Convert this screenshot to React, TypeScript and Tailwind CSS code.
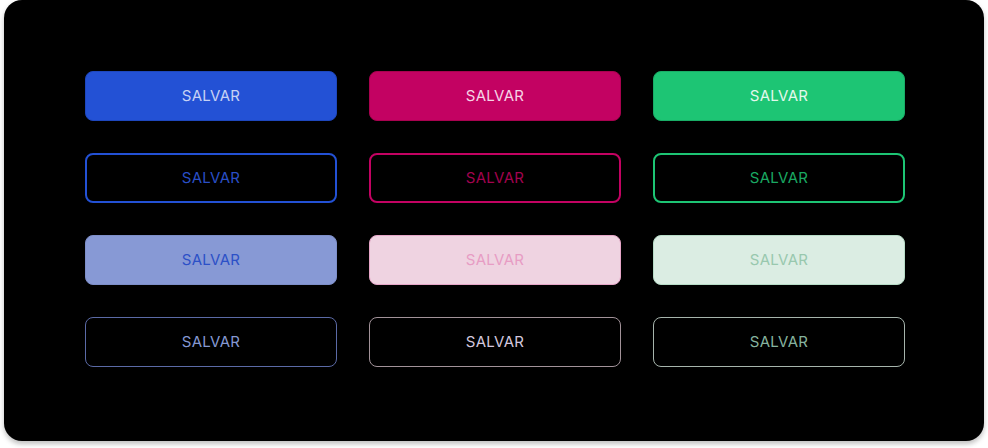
import React from "react";

type Btn = {
  id: number;
  box: string;
  text: string;
};

const Buttons: Btn[] = [
  { id: 1, box: "bg-[#2351d5] border border-[#1e47bd]", text: "text-[#c7d1f4]" },
  { id: 2, box: "bg-[#c30262] border border-[#a8024f]", text: "text-[#f6d4e6]" },
  { id: 3, box: "bg-[#1dc574] border border-[#19ad66]", text: "text-[#e3f8ec]" },
  { id: 4, box: "bg-black border-2 border-[#2351d5]", text: "text-[#2a4fc6]" },
  { id: 5, box: "bg-black border-2 border-[#c30262]", text: "text-[#a2034f]" },
  { id: 6, box: "bg-black border-2 border-[#1dc574]", text: "text-[#1aa862]" },
  { id: 7, box: "bg-[#8799d5] border border-[#7d8ec8]", text: "text-[#2c50c7]" },
  { id: 8, box: "bg-[#efd3e1] border border-[#e6a6c8]", text: "text-[#e79cc4]" },
  { id: 9, box: "bg-[#dbede3] border border-[#b7dcc7]", text: "text-[#98c8ae]" },
  { id: 10, box: "bg-black border border-[#5b6aa6]", text: "text-[#8598d2]" },
  { id: 11, box: "bg-black border border-[#a29299]", text: "text-[#d3c7de]" },
  { id: 12, box: "bg-black border border-[#a6b4ac]", text: "text-[#86b39f]" },
];

const App: React.FC = () => {
  return (
    <div className="w-[988px] h-[448px] bg-white font-['Inter','Noto_Sans',sans-serif]">
      <div className="ml-[4px] w-[980px] h-[441px] bg-black rounded-[18px] shadow-[0_3px_5px_rgba(0,0,0,0.25)] pt-[71px] pl-[81px]">
        <div className="grid grid-cols-[252px_252px_252px] gap-x-[32px] gap-y-[32px]">
          {Buttons.map((b) => (
            <button
              key={b.id}
              className={`h-[50px] rounded-lg flex items-center justify-center text-[15px] tracking-[0.3px] ${b.box} ${b.text}`}
            >
              SALVAR
            </button>
          ))}
        </div>
      </div>
    </div>
  );
};

export default App;
